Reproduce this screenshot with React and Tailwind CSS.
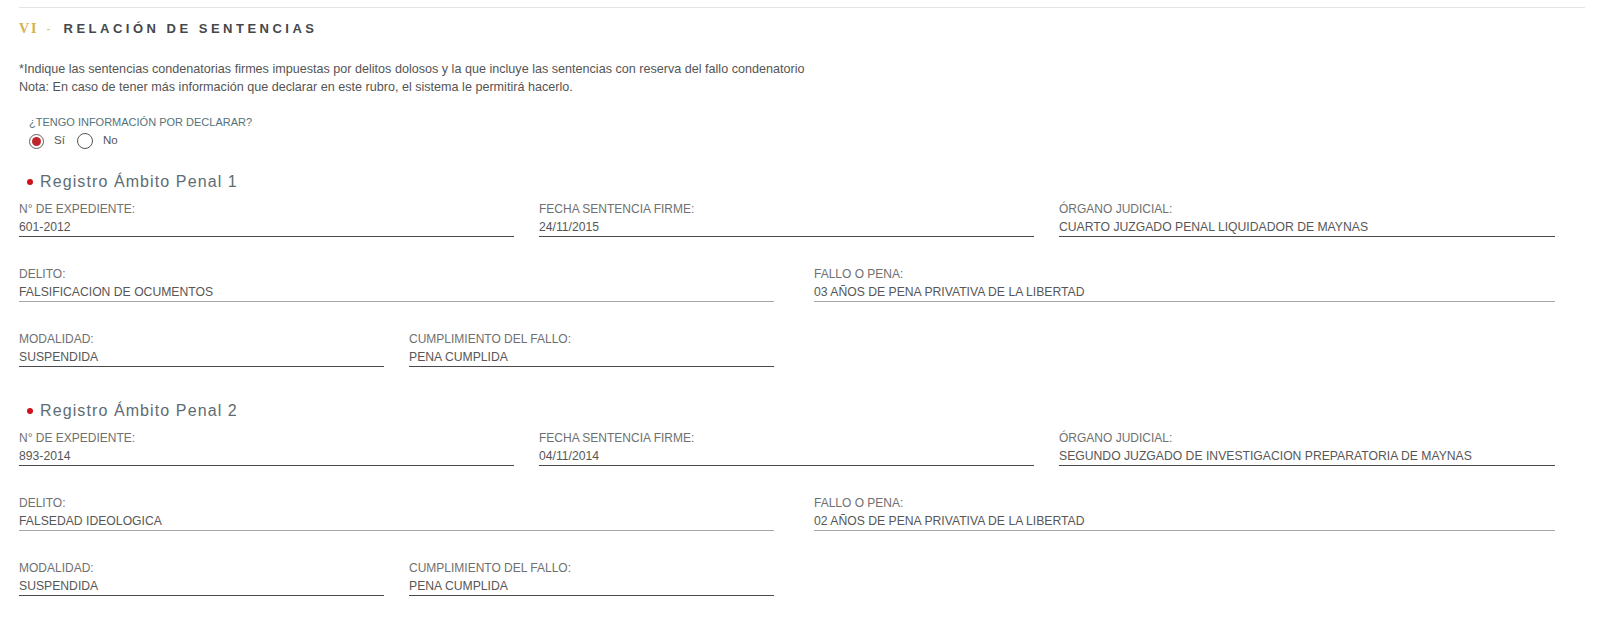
import React from "react";

const font = { fontFamily: '"Liberation Sans", Arial, sans-serif' };

function Field({ label, value, line = "dark" }) {
  return (
    <div className="flex flex-col min-w-0">
      <div className="text-[12px] leading-[18px] text-[#707070] whitespace-nowrap">{label}</div>
      <div
        className={
          "text-[12.2px] leading-[18px] text-[#575757] whitespace-nowrap border-b " +
          (line === "dark" ? "border-[#4a4a4a]" : "border-[#a8a8a8]")
        }
      >
        {value}
      </div>
    </div>
  );
}

function Registro({ n, data, className }) {
  return (
    <div className={className}>
      <div className="flex items-center h-[20px] pl-[8px]">
        <span className="w-[6px] h-[6px] rounded-full bg-[#d1121c] mr-[7px]" />
        <span className="text-[16px] leading-[20px] tracking-[1.1px] text-[#5d6d73]">
          Registro Ámbito Penal {n}
        </span>
      </div>
      <div className="mt-[8px] grid grid-cols-[495px_495px_496px] gap-x-[25px]">
        <Field label="N° DE EXPEDIENTE:" value={data.exp} />
        <Field label="FECHA SENTENCIA FIRME:" value={data.fecha} />
        <Field label="ÓRGANO JUDICIAL:" value={data.organo} />
      </div>
      <div className="mt-[28px] grid grid-cols-[755px_741px] gap-x-[40px]">
        <Field label="DELITO:" value={data.delito} line="light" />
        <Field label="FALLO O PENA:" value={data.fallo} line="light" />
      </div>
      <div className="mt-[28px] grid grid-cols-[365px_365px] gap-x-[25px]">
        <Field label="MODALIDAD:" value={data.modalidad} />
        <Field label="CUMPLIMIENTO DEL FALLO:" value={data.cumplimiento} />
      </div>
    </div>
  );
}

export default function App() {
  const r1 = {
    exp: "601-2012",
    fecha: "24/11/2015",
    organo: "CUARTO JUZGADO PENAL LIQUIDADOR DE MAYNAS",
    delito: "FALSIFICACION DE OCUMENTOS",
    fallo: "03 AÑOS DE PENA PRIVATIVA DE LA LIBERTAD",
    modalidad: "SUSPENDIDA",
    cumplimiento: "PENA CUMPLIDA",
  };
  const r2 = {
    exp: "893-2014",
    fecha: "04/11/2014",
    organo: "SEGUNDO JUZGADO DE INVESTIGACION PREPARATORIA DE MAYNAS",
    delito: "FALSEDAD IDEOLOGICA",
    fallo: "02 AÑOS DE PENA PRIVATIVA DE LA LIBERTAD",
    modalidad: "SUSPENDIDA",
    cumplimiento: "PENA CUMPLIDA",
  };
  return (
    <div className="w-[1600px] h-[641px] bg-white overflow-hidden pt-[7px] pl-[19px]" style={font}>
      <div className="h-px w-[1566px] bg-[#e4e4e4]" />
      <div className="mt-[13px] h-[16px] flex items-center leading-[16px]">
        <span
          className="font-bold text-[#d4b24c] text-[14px] tracking-[2px]"
          style={{ fontFamily: '"Liberation Serif", "Times New Roman", serif' }}
        >
          VI
        </span>
        <span className="text-[#dcc27a] text-[12px] ml-[8px] mr-[13px]">-</span>
        <span className="font-bold text-[13px] text-[#45474a] tracking-[3.5px]">RELACIÓN DE SENTENCIAS</span>
      </div>
      <div className="mt-[23px] text-[12.6px] leading-[18px] text-[#555]">
        <div>
          *Indique las sentencias condenatorias firmes impuestas por delitos dolosos y la que incluye las sentencias con reserva del fallo condenatorio
        </div>
        <div>Nota: En caso de tener más información que declarar en este rubro, el sistema le permitirá hacerlo.</div>
      </div>
      <div className="pl-[10px]">
        <div className="mt-[19px] text-[11px] leading-[14px] text-[#55727a]">¿TENGO INFORMACIÓN POR DECLARAR?</div>
        <div className="mt-[4px] h-[16px] flex items-center text-[11.5px] text-[#555]">
          <span className="w-[15px] h-[15px] rounded-full border-[1.5px] border-[#6a5a5a] flex items-center justify-center">
            <span className="w-[9px] h-[9px] rounded-full bg-[#c0262d]" />
          </span>
          <span className="ml-[10px]">Sí</span>
          <span className="ml-[12px] w-[16px] h-[16px] rounded-full border-[1.5px] border-[#555]" />
          <span className="ml-[10px]">No</span>
        </div>
      </div>
      <Registro n={1} data={r1} className="mt-[23px]" />
      <Registro n={2} data={r2} className="mt-[34px]" />
    </div>
  );
}
